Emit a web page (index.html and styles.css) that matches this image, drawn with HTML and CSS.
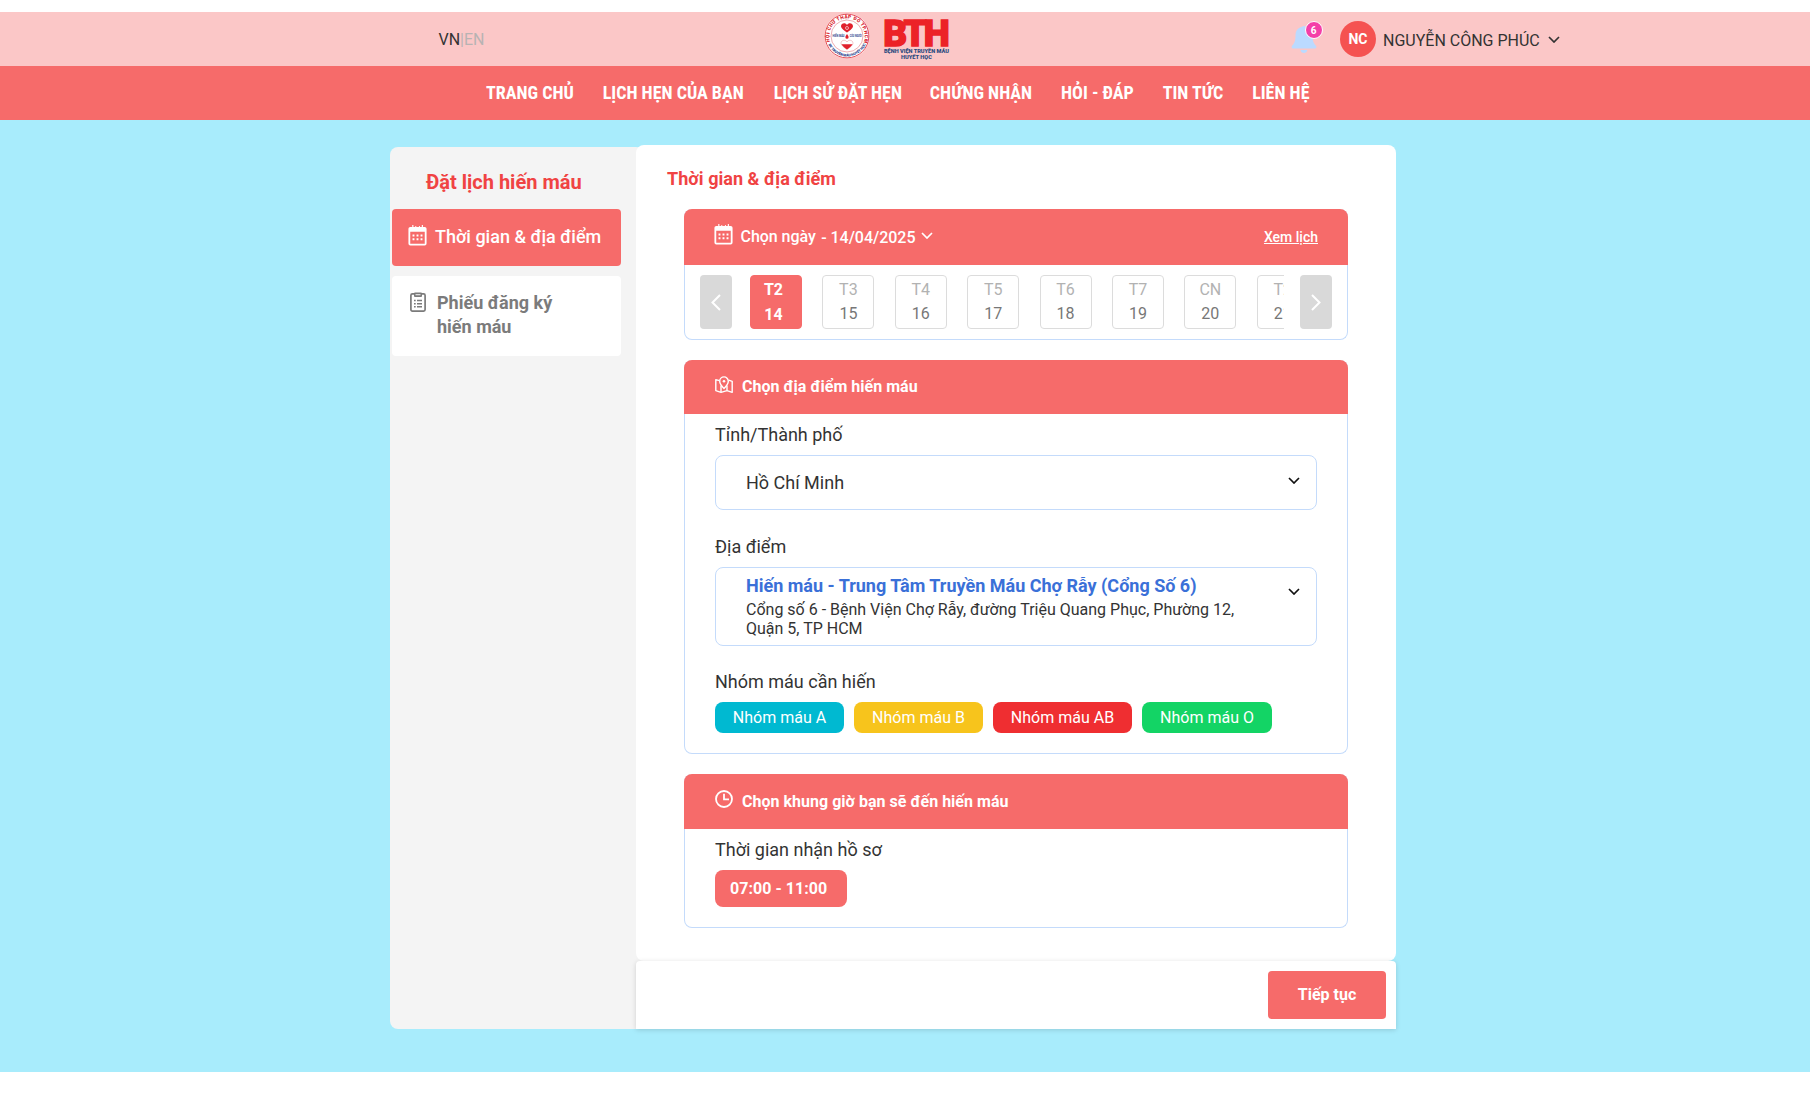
FILE: index.html
```html
<!DOCTYPE html>
<html lang="vi">
<head>
<meta charset="utf-8">
<title>Đặt lịch hiến máu</title>
<link rel="stylesheet" href="styles.css">
</head>
<body>
<svg class="defs" width="0" height="0" aria-hidden="true">
  <symbol id="calendar" viewBox="0 0 19 22">
    <path fill="currentColor" fill-rule="evenodd" d="M4 0h1.200v2h2V1h1v1h2.800V1h1v1h2V0h1.200v2H17a2 2 0 0 1 2 2v15.500a2 2 0 0 1-2 2H2a2 2 0 0 1-2-2V4a2 2 0 0 1 2-2h2zM1.900 7v12.600h15.200V7z"/>
    <path fill="currentColor" d="M4.300 10h2v2h-2zm4.200 0h2v2h-2zm4.200 0h2v2h-2zM4.300 14h2v2h-2zm4.200 0h2v2h-2zm4.200 0h2v2h-2z"/>
  </symbol>
  <symbol id="chevron" viewBox="0 0 12 7">
    <path fill="none" stroke="currentColor" stroke-width="1.700" d="M1 1l5 5 5-5"/>
  </symbol>
</svg>

<header class="topbar">
  <div class="lang">VN<span class="lang-off">|EN</span></div>
  <svg class="seal" viewBox="-23 -23 46 46">
    <defs>
      <path id="arc-top" d="M-16.500 6.500A17.700 17.700 0 1 1 16.500 6.500"/>
      <path id="arc-bottom" d="M-19 7.500A20.400 20.400 0 0 0 19 7.500"/>
    </defs>
    <circle r="22.500" fill="#fff"/>
    <circle r="21.900" fill="none" stroke="#e23a45" stroke-width=".9"/>
    <circle r="16" fill="none" stroke="#e58a90" stroke-width=".7"/>
    <text class="seal-red"><textPath href="#arc-top" startOffset="1" textLength="67">HỘI CHỮ THẬP ĐỎ TP.HCM</textPath></text>
    <text class="seal-blue"><textPath href="#arc-bottom" startOffset="1" textLength="47">BV TRUYỀN MÁU HUYẾT HỌC</textPath></text>
    <path fill="#e0202c" d="M0-3.500c-2-1.500-6-4-6-6.300 0-3.200 4.500-4 6-1.200 1.500-2.800 6-2 6 1.200C6-7.500 2-5 0-3.500z"/>
    <circle cy="-8" r="1.500" fill="none" stroke="#fff" stroke-width=".6"/>
    <path fill="#fff" stroke="#e58a90" stroke-width=".5" d="M0 13.500C-2 12-6 9.500-6 7.200-6 4 -1.500 3.200 0 6 1.500 3.200 6 4 6 7.200 6 9.500 2 12 0 13.500z"/>
    <path fill="#e0202c" d="M-5.500 8.300h11C4.500 10.300 1.600 12.300 0 13.500c-1.600-1.200-4.500-3.200-5.500-5.200z"/>
    <path fill="#e0202c" d="M0-2c1 1.500 1.600 2.400 1.600 3.200a1.600 1.600 0 0 1-3.200 0C-1.600.4-1-.5 0-2z"/>
    <text class="seal-mid" x="-14.500" y="1.400" textLength="12" lengthAdjust="spacingAndGlyphs">HIẾN MÁU</text>
    <text class="seal-mid" x="2.800" y="1.400" textLength="12" lengthAdjust="spacingAndGlyphs">CỨU NGƯỜI</text>
  </svg>
  <svg class="bth" viewBox="0 0 66 44">
    <text class="bth-name" y="28.500"><tspan x="-.8">B</tspan><tspan x="19.500">T</tspan><tspan x="39.800">H</tspan></text>
    <text class="bth-sub" x="0" y="36" textLength="65" lengthAdjust="spacingAndGlyphs">BỆNH VIỆN TRUYỀN MÁU</text>
    <text class="bth-sub" x="17" y="42" textLength="31" lengthAdjust="spacingAndGlyphs">HUYẾT HỌC</text>
  </svg>
  <div class="bell">
    <svg viewBox="0 0 26 27"><path fill="#bbdaff" d="M13 0a3 3 0 0 1 2 .8c4.300 1 6.500 4.200 6.500 8.700 0 6 1.300 8 3.500 10.200.8 1.100.4 2.800-1 2.800H2c-1.400 0-1.800-1.700-1-2.800C3.200 17.500 4.500 15.500 4.500 9.500 4.500 5 6.700 1.800 11 .8A3 3 0 0 1 13 0zM9.500 24h6.800c-.2 1.800-1.600 3-3.400 3s-3.200-1.200-3.400-3z"/></svg>
    <span class="badge">6</span>
  </div>
  <div class="avatar">NC</div>
  <span class="user">NGUYỄN CÔNG PHÚC</span>
  <svg class="chev user-chev"><use href="#chevron"/></svg>
</header>

<nav class="nav">
  <a>TRANG CHỦ</a><a>LỊCH HẸN CỦA BẠN</a><a class="nav-history">LỊCH SỬ ĐẶT HẸN</a><a>CHỨNG NHẬN</a><a>HỎI - ĐÁP</a><a>TIN TỨC</a><a>LIÊN HỆ</a>
</nav>

<main class="page">
  <aside class="side">
    <h2>Đặt lịch hiến máu</h2>
    <div class="step step-on">
      <svg class="ico-cal"><use href="#calendar"/></svg>
      <span>Thời gian &amp; địa điểm</span>
    </div>
    <div class="step step-off">
      <svg class="ico-form" viewBox="0 0 16 20">
        <rect x=".9" y="1.900" width="14.200" height="17.200" rx="1.500" fill="none" stroke="currentColor" stroke-width="1.700"/>
        <path fill="currentColor" d="M4 1.500a1 1 0 0 1 1-1h6a1 1 0 0 1 1 1V4a1 1 0 0 1-1 1H5a1 1 0 0 1-1-1z"/>
        <path fill="#ddd" d="M5.500 2h5v1.300h-5z"/>
        <path fill="currentColor" d="M4 7.700h1.700v1.600H4zM7 7.700h5v1.600H7zM4 10.900h1.700v1.600H4zM7 10.900h5v1.600H7zM4 14h1.700v1.600H4zM7 14h5v1.600H7z"/>
      </svg>
      <span>Phiếu đăng ký<br>hiến máu</span>
    </div>
  </aside>

  <div class="content">
    <div class="panel">
      <h1>Thời gian &amp; địa điểm</h1>

      <section class="card card-date">
        <div class="head">
          <svg class="ico-cal"><use href="#calendar"/></svg>
          <span class="pick">Chọn ngày</span>
          <span class="date">- 14/04/2025</span>
          <svg class="chev chev-date"><use href="#chevron"/></svg>
          <a class="see">Xem lịch</a>
        </div>
        <div class="days">
          <div class="arrow"><svg viewBox="0 0 10 17"><path d="M9 1L1.500 8.500 9 16"/></svg></div>
          <div class="strip">
            <div class="day day-on"><span>T2</span><span>14</span></div>
            <div class="day"><b>T3</b><span>15</span></div>
            <div class="day"><b>T4</b><span>16</span></div>
            <div class="day"><b>T5</b><span>17</span></div>
            <div class="day"><b>T6</b><span>18</span></div>
            <div class="day"><b>T7</b><span>19</span></div>
            <div class="day"><b>CN</b><span>20</span></div>
            <div class="day"><b>T2</b><span>21</span></div>
          </div>
          <div class="arrow"><svg viewBox="0 0 10 17"><path d="M1 1l7.500 7.500L1 16"/></svg></div>
        </div>
      </section>

      <section class="card card-place">
        <div class="head">
          <svg class="ico-map" viewBox="0 0 18 17">
            <g fill="none" stroke="currentColor" stroke-width="1.400" stroke-linejoin="round">
              <path d="M9 12.500C6.500 10 4.700 8 4.700 5.200a4.300 4.300 0 0 1 8.600 0C13.300 8 11.500 10 9 12.500z"/>
              <path d="M4.300 4.600L.8 3.600v11l5.200 1.700 6-1.700 5.200 1.700v-11l-3.500-1.200M6 16.300V9.500M12 14.600V9.500"/>
            </g>
            <circle cx="9" cy="5.200" r="1.300" fill="currentColor"/>
          </svg>
          <span class="strong">Chọn địa điểm hiến máu</span>
        </div>
        <div class="body">
          <div class="label">Tỉnh/Thành phố</div>
          <div class="select city"><span>Hồ Chí Minh</span><svg class="chev"><use href="#chevron"/></svg></div>
          <div class="label label-2">Địa điểm</div>
          <div class="select place">
            <div>
              <div class="place-name">Hiến máu - Trung Tâm Truyền Máu Chợ Rẫy (Cổng Số 6)</div>
              <div class="place-addr">Cổng số 6 - Bệnh Viện Chợ Rẫy, đường Triệu Quang Phục, Phường 12,<br>Quận 5, TP HCM</div>
            </div>
            <svg class="chev"><use href="#chevron"/></svg>
          </div>
          <div class="label label-3">Nhóm máu cần hiến</div>
          <div class="pills">
            <span class="pill pill-a">Nhóm máu A</span>
            <span class="pill pill-b">Nhóm máu B</span>
            <span class="pill pill-ab">Nhóm máu AB</span>
            <span class="pill pill-o">Nhóm máu O</span>
          </div>
        </div>
      </section>

      <section class="card card-time">
        <div class="head">
          <svg class="ico-clock" viewBox="0 0 18 18"><g fill="none" stroke="currentColor" stroke-width="1.800"><circle cx="9" cy="9" r="8"/><path d="M9 3.800V9.300h5"/></g></svg>
          <span class="strong">Chọn khung giờ bạn sẽ đến hiến máu</span>
        </div>
        <div class="body">
          <div class="label">Thời gian nhận hồ sơ</div>
          <div class="slot">07:00 - 11:00</div>
        </div>
      </section>
    </div>
    <div class="foot"><button class="next">Tiếp tục</button></div>
  </div>
</main>
</body>
</html>
```
FILE: styles.css
```css
* { box-sizing: border-box; }
body {
  margin: 0;
  padding-top: 12px;
  background: #fff;
  color: #333;
  font: 16px/20px Roboto, "Liberation Sans", sans-serif;
}
h1, h2 { margin: 0; }
svg { display: block; flex: none; }
.defs { position: absolute; }
.chev { width: 12px; height: 7px; }

.topbar {
  display: flex;
  align-items: center;
  height: 54px;
  padding-left: 438.500px;
  background: #fbc7c7;
}
.lang { width: 385px; padding-top: 1px; }
.lang-off { color: #b7b3b3; }
.seal { width: 46px; height: 46px; margin-top: -7px; }
.seal-red { font-size: 4.8px; font-weight: 900; fill: #d8202c; }
.seal-blue { font-size: 3.6px; font-weight: 900; fill: #27408b; }
.seal-mid { font-size: 3.4px; font-weight: 700; fill: #27408b; }
.bth { width: 66px; height: 44px; margin: 0 0 1px 14px; overflow: visible; }
.bth-name { font-size: 37px; font-weight: 900; fill: #ec2227; stroke: #ec2227; stroke-width: 1.4px; }
.bth-sub { font-size: 5.6px; font-weight: 900; fill: #2b4a80; }
.bell { position: relative; width: 26px; height: 27px; margin-left: 341px; }
.bell svg { width: 26px; height: 27px; }
.badge {
  position: absolute;
  left: 14px;
  top: -5px;
  width: 18px;
  height: 18px;
  border: 1px solid #fff;
  border-radius: 50%;
  background: #f43fa8;
  color: #fff;
  font-size: 10px;
  font-weight: 700;
  line-height: 17px;
  text-align: center;
}
.avatar {
  width: 36px;
  height: 36px;
  margin-left: 23.500px;
  border-radius: 50%;
  background: #f55251;
  color: #fff;
  font-size: 14px;
  font-weight: 700;
  line-height: 36px;
  text-align: center;
}
.user { margin: 3px 0 0 7px; }
.user-chev { margin-left: 8px; }

.nav {
  display: flex;
  align-items: center;
  gap: 28.900px;
  height: 54px;
  padding-left: 486px;
  background: #f66b6a;
  color: #fff;
  font-family: "Roboto Condensed", Roboto, sans-serif;
  font-size: 18px;
  font-weight: 700;
  font-stretch: 75%;
  white-space: nowrap;
}
.nav-history { margin: 0 -1px 0 1px; }

.page {
  display: flex;
  height: 952px;
  padding: 25px 0 43px 390px;
  background: #a8ecfc;
}
.side {
  width: 254px;
  margin: 2px -8px 0 0;
  padding: 25px 0 0 2px;
  border-radius: 8px;
  background: #f4f4f4;
}
.side h2 {
  height: 37px;
  padding-left: 34px;
  color: #f04343;
  font-size: 20px;
  line-height: 20px;
}
.step {
  display: flex;
  width: 229px;
  border-radius: 4px;
  font-size: 18px;
  line-height: 24px;
}
.step-on {
  height: 57.400px;
  padding: 16px;
  background: #f66b6a;
  color: #fff;
  font-weight: 500;
}
.step-on span { margin-left: 8px; }
.step-off {
  height: 80px;
  margin-top: 9.600px;
  padding: 15px 18px;
  background: #fff;
  color: #7b7b7b;
  font-weight: 700;
}
.step-off span { margin-left: 11px; }
.ico-cal { width: 19px; height: 21px; }
.ico-form { width: 16px; height: 20px; margin-top: 1px; }

.content { position: relative; width: 760px; }
.panel {
  height: 816px;
  padding: 24px 48px 0;
  border-radius: 8px;
  background: #fff;
}
.panel h1 {
  height: 40px;
  margin-left: -17px;
  color: #f04343;
  font-size: 18px;
  line-height: 20px;
  letter-spacing: .04px;
}
.card {
  margin-bottom: 20px;
  border: 1px solid #c4dbfb;
  border-top: 0;
  border-radius: 8px;
}
.head {
  display: flex;
  align-items: center;
  height: 55px;
  margin: 0 -1px;
  padding: 0 30px 0 31px;
  border-radius: 8px 8px 0 0;
  background: #f66b6a;
  color: #fff;
  font-weight: 500;
}
.card-date { height: 130.500px; }
.card-date .head { height: 55.500px; }
.card-date .ico-cal { margin: -4px 0 0 -1px; }
.pick { margin-left: 7.500px; letter-spacing: -.05px; }
.date { margin: 2px 0 0 5.500px; letter-spacing: -.03px; }
.chev-date { margin: -2px 0 0 6px; }
.see { margin: 1px 0 0 auto; font-size: 14px; text-decoration: underline; }
.days { display: flex; padding: 10.500px 15px; }
.arrow {
  display: flex;
  align-items: center;
  justify-content: center;
  width: 32px;
  height: 54px;
  border-radius: 4px;
  background: #d9d9d9;
}
.arrow svg { width: 10px; height: 17px; fill: none; stroke: #fff; stroke-width: 2; }
.strip {
  display: flex;
  gap: 20.400px;
  width: 534px;
  margin: 0 16px 0 18px;
  overflow: hidden;
}
.day {
  display: flex;
  flex: none;
  flex-direction: column;
  align-items: center;
  gap: 4px;
  width: 52px;
  height: 54px;
  padding-top: 4px;
  border: 1px solid #dcdcdc;
  border-radius: 4px;
  color: #777;
}
.day b { color: #b2b2b2; font-weight: 400; }
.day-on {
  gap: 5px;
  padding-right: 5px;
  border-color: #f66b6a;
  background: #f66b6a;
  color: #fff;
  font-weight: 700;
}

.body { padding: 0 30px; }
.card-place { height: 394.500px; }
.card-place .head { height: 54.400px; }
.card-time { height: 154px; }
.strong { margin-left: 9px; font-weight: 700; letter-spacing: .02px; }
.ico-map { width: 18px; height: 17px; margin-top: -4px; }
.ico-clock { width: 18px; height: 18px; margin-top: -5px; }
.label { height: 41px; padding-top: 11px; font-size: 18px; }
.label-2 { margin-top: 16px; }
.label-3 { margin-top: 15px; }
.select {
  display: flex;
  justify-content: space-between;
  padding: 0 16.500px 0 30px;
  border: 1px solid #c4dbfb;
  border-radius: 8px;
}
.select .chev { color: #111; }
.city { height: 55px; align-items: center; font-size: 18px; }
.city span { padding-top: 1px; }
.city .chev { margin-top: -4px; }
.place { height: 79px; padding-top: 7px; }
.place .chev { margin-top: 13px; }
.place-name { color: #3a70d8; font-size: 18px; font-weight: 700; line-height: 22px; }
.place-addr { margin-top: 3px; line-height: 19px; white-space: nowrap; }
.pills { display: flex; gap: 10px; color: #fff; }
.pill { height: 31.500px; border-radius: 8px; line-height: 32px; text-align: center; }
.pill-a { width: 129px; background: #00b9d1; }
.pill-b { width: 129px; background: #f7c41c; }
.pill-ab { width: 139px; background: #ef2e31; }
.pill-o { width: 130px; background: #13d465; }
.slot {
  width: 132px;
  height: 37px;
  padding-left: 15px;
  border-radius: 8px;
  background: #f66b6a;
  color: #fff;
  font-weight: 700;
  line-height: 37px;
  letter-spacing: .04px;
}
.foot {
  display: flex;
  justify-content: flex-end;
  height: 68px;
  padding: 10px 10px 0 0;
  border-radius: 4px 4px 0 0;
  background: #fff;
  box-shadow: 0 1px 5px rgba(0, 0, 0, .15);
}
.next {
  width: 118px;
  height: 48px;
  padding: 0;
  border: 0;
  border-radius: 4px;
  background: #f66b6a;
  color: #fff;
  font: 700 16px/48px Roboto, sans-serif;
}
```
